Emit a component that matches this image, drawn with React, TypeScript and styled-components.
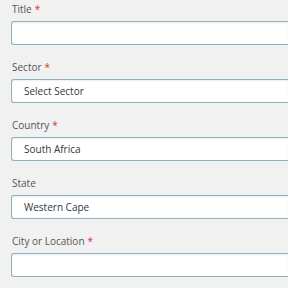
import styled, { createGlobalStyle } from "styled-components";

const GlobalStyle = createGlobalStyle`
  html, body {
    margin: 0;
    padding: 0;
    background: #f1f1f1;
    font-family: "Open Sans", "Liberation Sans", sans-serif;
  }
`;

const Form = styled.form`
  display: flex;
  flex-direction: column;
  gap: 15px;
  padding: 2px 0 0 11px;
`;

const Field = styled.div`
  display: flex;
  flex-direction: column;
  gap: 5px;
`;

const Label = styled.label`
  font-size: 10px;
  line-height: 14px;
  color: #555;
  padding-left: 1px;

  span {
    color: #dc3232;
    margin-left: 3px;
  }
`;

// boxes run off the right edge in the screenshot, so no right border
const Box = styled.div`
  box-sizing: border-box;
  height: 24px;
  background: #fff;
  border: 1px solid #8fb0c0;
  border-right: none;
  border-radius: 3px 0 0 3px;
  box-shadow: inset 0 1px 2px rgba(0, 0, 0, 0.07);
  padding: 0 12px;
  display: flex;
  align-items: center;
  font-size: 10px;
  color: #32373c;
`;

const fields = [
  { label: "Title", required: true, value: "" },
  { label: "Sector", required: true, value: "Select Sector" },
  { label: "Country", required: true, value: "South Africa" },
  { label: "State", required: false, value: "Western Cape" },
  { label: "City or Location", required: true, value: "" },
];

export default function App() {
  return (
    <>
      <GlobalStyle />
      <Form>
        {fields.map((f) => (
          <Field key={f.label}>
            <Label>
              {f.label}
              {f.required && <span>*</span>}
            </Label>
            <Box>{f.value}</Box>
          </Field>
        ))}
      </Form>
    </>
  );
}
